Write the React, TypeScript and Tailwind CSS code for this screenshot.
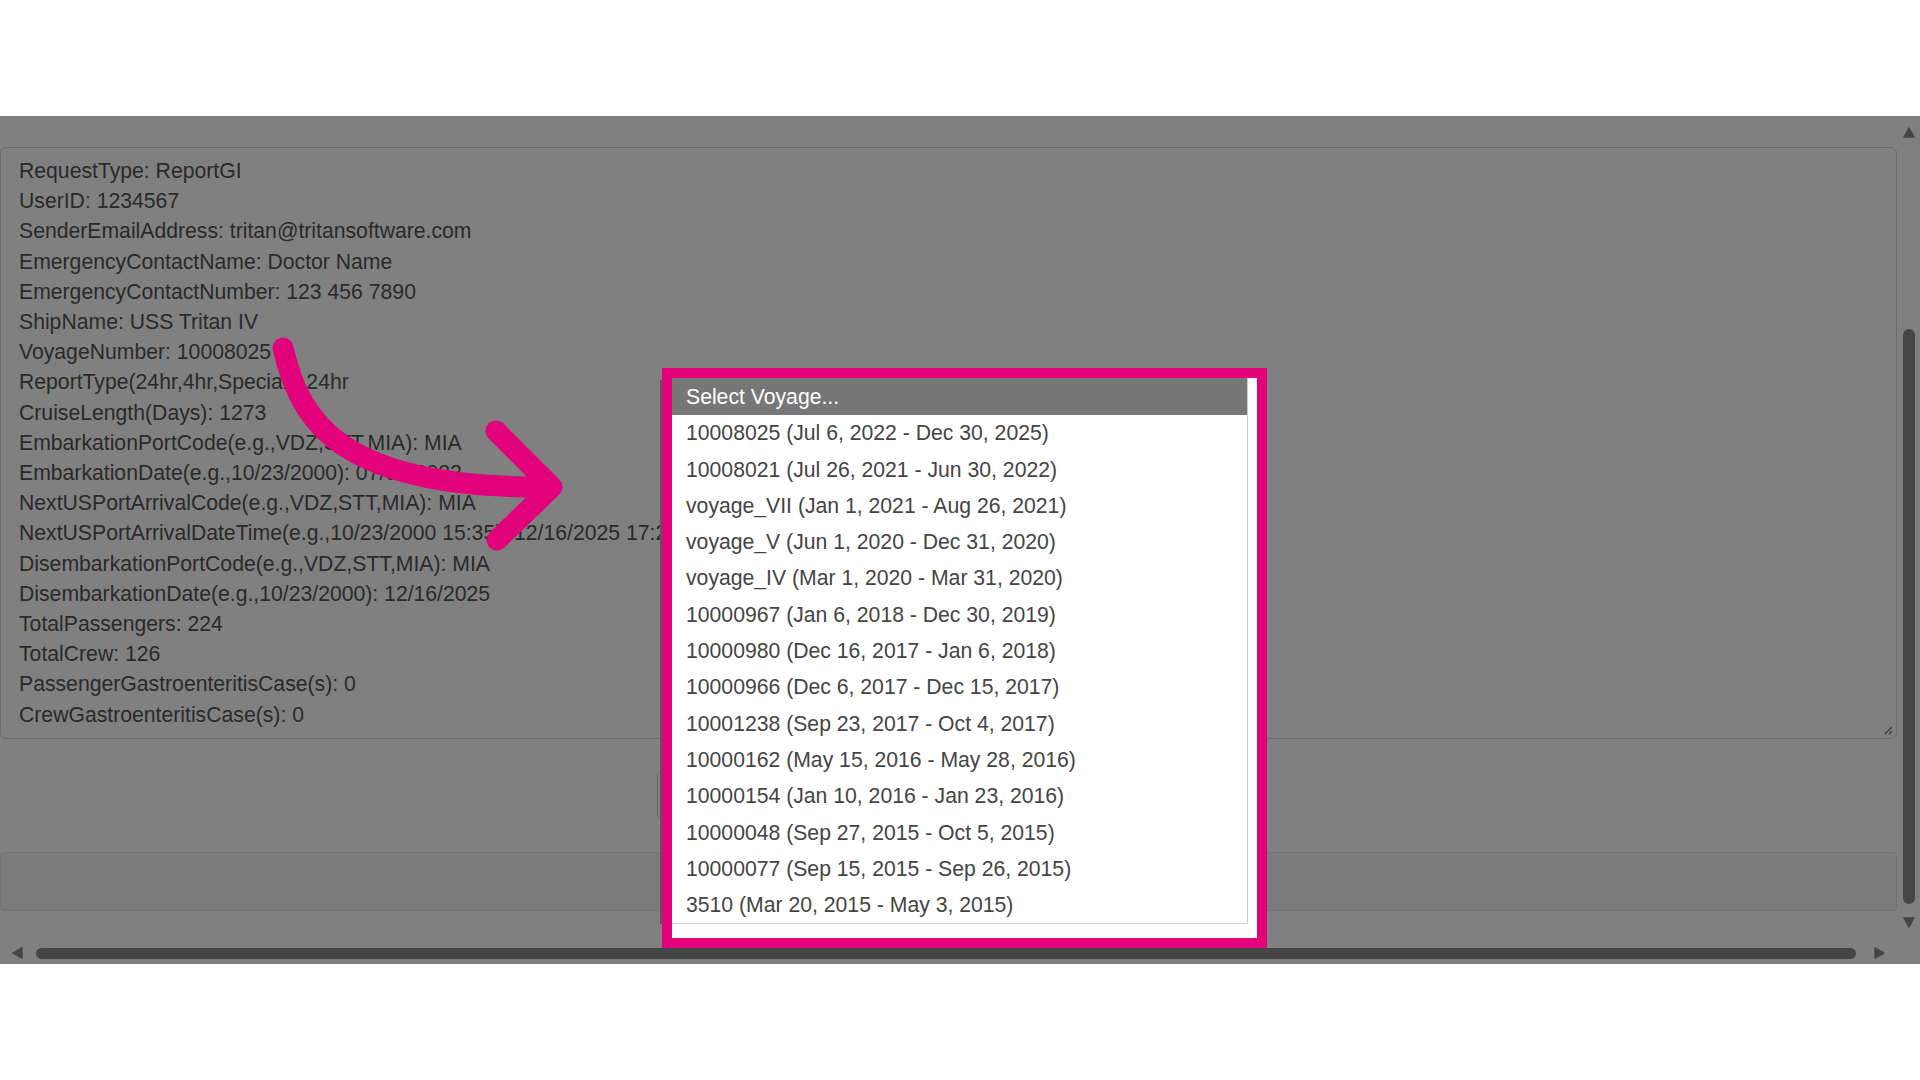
import React from 'react';

const reportLines = [
  'RequestType: ReportGI',
  'UserID: 1234567',
  'SenderEmailAddress: tritan@tritansoftware.com',
  'EmergencyContactName: Doctor Name',
  'EmergencyContactNumber: 123 456 7890',
  'ShipName: USS Tritan IV',
  'VoyageNumber: 10008025',
  'ReportType(24hr,4hr,Special): 24hr',
  'CruiseLength(Days): 1273',
  'EmbarkationPortCode(e.g.,VDZ,STT,MIA): MIA',
  'EmbarkationDate(e.g.,10/23/2000): 07/06/2022',
  'NextUSPortArrivalCode(e.g.,VDZ,STT,MIA): MIA',
  'NextUSPortArrivalDateTime(e.g.,10/23/2000 15:35): 12/16/2025 17:25',
  'DisembarkationPortCode(e.g.,VDZ,STT,MIA): MIA',
  'DisembarkationDate(e.g.,10/23/2000): 12/16/2025',
  'TotalPassengers: 224',
  'TotalCrew: 126',
  'PassengerGastroenteritisCase(s): 0',
  'CrewGastroenteritisCase(s): 0',
];

const voyages = [
  '10008025 (Jul 6, 2022 - Dec 30, 2025)',
  '10008021 (Jul 26, 2021 - Jun 30, 2022)',
  'voyage_VII (Jan 1, 2021 - Aug 26, 2021)',
  'voyage_V (Jun 1, 2020 - Dec 31, 2020)',
  'voyage_IV (Mar 1, 2020 - Mar 31, 2020)',
  '10000967 (Jan 6, 2018 - Dec 30, 2019)',
  '10000980 (Dec 16, 2017 - Jan 6, 2018)',
  '10000966 (Dec 6, 2017 - Dec 15, 2017)',
  '10001238 (Sep 23, 2017 - Oct 4, 2017)',
  '10000162 (May 15, 2016 - May 28, 2016)',
  '10000154 (Jan 10, 2016 - Jan 23, 2016)',
  '10000048 (Sep 27, 2015 - Oct 5, 2015)',
  '10000077 (Sep 15, 2015 - Sep 26, 2015)',
  '3510 (Mar 20, 2015 - May 3, 2015)',
];

// small scrollbar triangles
const Tri: React.FC<{ dir: 'up' | 'down' | 'left' | 'right' }> = ({ dir }) => {
  const pts = {
    up: '1,10 6,1 11,10',
    down: '1,1 11,1 6,10',
    left: '10,1 10,11 1,6',
    right: '1,1 1,11 10,6',
  }[dir];
  return (
    <svg width="12" height="12" viewBox="0 0 12 12">
      <polygon points={pts} fill="#454545" stroke="#454545" strokeWidth="1.5" strokeLinejoin="round" />
    </svg>
  );
};

const App: React.FC = () => {
  return (
    <div className="relative w-[1920px] h-[1080px] bg-white overflow-hidden font-['Liberation_Sans',Arial,sans-serif]">
      {/* top strip */}
      <div className="h-[116px] bg-white" />

      {/* dimmed page */}
      <div className="h-[848px] bg-[#808080] flex flex-col">
        <div className="flex h-[826px]">
          <div className="flex-1 flex flex-col pt-[31px]">
            {/* report textarea */}
            <div className="relative h-[592px] border border-[#6a6a6a] rounded-[6px] pl-[18px] pt-[8px] text-[21.2px] leading-[30.2px] text-[#2a2a2a]">
              {reportLines.map((line) => (
                <div key={line} className="whitespace-nowrap">{line}</div>
              ))}
              <svg className="absolute right-[3px] bottom-[3px]" width="10" height="10" viewBox="0 0 10 10">
                <path d="M9 2 L2 9 M9 6 L6 9" stroke="#3a3a3a" strokeWidth="1.2" />
              </svg>
            </div>

            {/* action row */}
            <div className="h-[113px] pt-[31px] pl-[657px]">
              <div className="h-[50px] w-[320px] border border-[#6a6a6a] rounded-[6px] bg-[#808080]" />
            </div>

            {/* footer band */}
            <div className="h-[59px] bg-[#7b7b7b] border border-[#737373] rounded-[4px]" />
          </div>

          {/* vertical scrollbar */}
          <div className="w-[23px] flex flex-col items-center">
            <div className="mt-[11px]"><Tri dir="up" /></div>
            <div className="mt-[190px] w-[12px] h-[575px] rounded-full bg-[#454545]" />
            <div className="mt-[13px]"><Tri dir="down" /></div>
          </div>
        </div>

        {/* horizontal scrollbar */}
        <div className="h-[22px] flex items-center pl-[12px]">
          <Tri dir="left" />
          <div className="ml-[12px] w-[1820px] h-[11px] rounded-full bg-[#454545]" />
          <div className="ml-[18px]"><Tri dir="right" /></div>
        </div>
      </div>

      {/* native popup edge */}
      <div className="absolute left-[660px] top-[380px] w-[2px] h-[544px] bg-[#585858]" />

      {/* voyage dropdown, outlined */}
      <div className="absolute left-[662px] top-[368px] w-[605px] h-[580px] border-[10px] border-[#e3007b] bg-white">
        <div className="w-[576px] border-r border-b border-[#cccccc] text-[21.2px]">
          <div className="h-[37px] bg-[#777777] text-white flex items-center pl-[14px]">Select Voyage...</div>
          {voyages.map((v) => (
            <div key={v} className="h-[36.3px] flex items-center pl-[14px] text-[#444] whitespace-nowrap">{v}</div>
          ))}
        </div>
      </div>

      {/* pointer arrow */}
      <svg className="absolute left-0 top-0 pointer-events-none" width="1920" height="1080" viewBox="0 0 1920 1080">
        <g fill="none" stroke="#e3007b" strokeWidth="21" strokeLinecap="round" strokeLinejoin="round">
          <path d="M283 348 C300 422 340 489 550 487" />
          <path d="M496 431 L552 487 L497 540" />
        </g>
      </svg>
    </div>
  );
};

export default App;
